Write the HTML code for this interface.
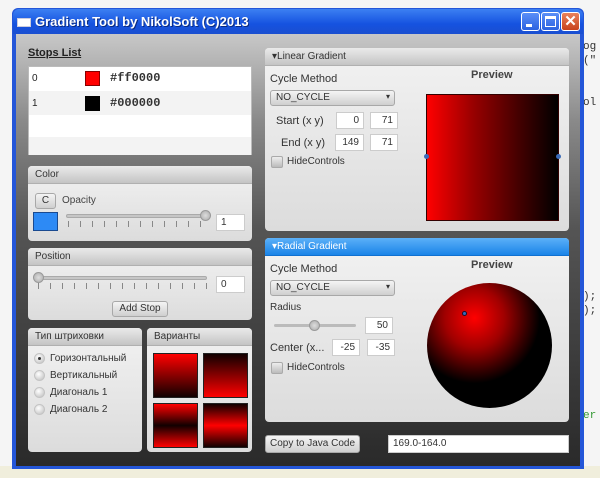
<!DOCTYPE html><html><head><style>
*{box-sizing:border-box;margin:0;padding:0}
body{width:600px;height:478px;overflow:hidden;background:#f0efe8;font-family:"Liberation Sans",sans-serif;font-size:10px;color:#222;position:relative}
.a{position:absolute}
.panel{position:absolute;background:linear-gradient(#f2f2f2,#dcdcdc);border-radius:4px;overflow:hidden}
.hd{height:18px;background:linear-gradient(#eaeaea,#c4c4c4);border-bottom:1px solid #b0b0b0;padding:3px 7px;font-size:10px;color:#333}
.tf{position:absolute;background:#fff;border:1px solid #ccc;height:17px;font-size:10px;padding:2px 4px;color:#333}
.btn{position:absolute;background:linear-gradient(#f4f4f4,#cfcfcf);border:1px solid #a8a8a8;border-radius:3px;font-size:10px;text-align:center;color:#333}
.chk{position:absolute;width:12px;height:12px;background:linear-gradient(#eee,#bbb);border:1px solid #aaa;border-radius:2px}
.rad{position:absolute;width:11px;height:11px;border-radius:50%;background:radial-gradient(circle at 40% 35%,#fff,#bbb);border:1px solid #c4c4c4}
.ticks{position:absolute;height:6px;background:repeating-linear-gradient(90deg,#888 0 1px,transparent 1px 12px)}
.track{position:absolute;height:4px;background:#c6c6c6;border:1px solid #aaa;border-radius:2px}
.thumb{position:absolute;width:11px;height:11px;border-radius:50%;background:radial-gradient(#ddd,#aaa);border:1px solid #999}
</style></head><body>
<div class="a" style="left:0;top:0;width:600px;height:478px;background:#f5f5f5"></div>
<div class="a" style="left:0;top:466px;width:600px;height:12px;background:#f0eedc"></div>
<div class="a" style="left:583px;top:40px;font-family:'Liberation Mono';font-size:11px;color:#333;line-height:14px">og<br>("<br><br><br>ol</div>
<div class="a" style="left:583px;top:290px;font-family:'Liberation Mono';font-size:11px;color:#333;line-height:14px">);<br>);</div>
<div class="a" style="left:583px;top:410px;font-family:'Liberation Mono';font-size:11px;color:#393">er</div>
<div class="a" style="left:12px;top:8px;width:572px;height:461px;background:#2456d8;border-radius:6px 6px 0 0"></div>
<div class="a" style="left:13px;top:9px;width:570px;height:25px;background:linear-gradient(#3c80f2,#1552e0 60%,#1a4fd0);border-radius:6px 6px 0 0"></div>
<div class="a" style="left:17px;top:18px;width:14px;height:9px;background:#fff;border:1px solid #ccd"></div>
<div class="a" style="left:35px;top:14px;color:#fff;font-size:13px;font-weight:bold;text-shadow:1px 1px #0a2a80">Gradient Tool by NikolSoft (C)2013</div>
<div class="a" style="left:521px;top:12px;width:19px;height:19px;background:linear-gradient(#5a8ff8,#2c62e0);border:1px solid #fff;border-radius:3px"><div class="a" style="left:4px;top:11px;width:6px;height:3px;background:#fff"></div></div>
<div class="a" style="left:541px;top:12px;width:19px;height:19px;background:linear-gradient(#5a8ff8,#2c62e0);border:1px solid #fff;border-radius:3px"><div class="a" style="left:3px;top:3px;width:11px;height:11px;border:1px solid #fff;border-top-width:3px"></div></div>
<div class="a" style="left:561px;top:12px;width:19px;height:19px;background:linear-gradient(#e8825c,#c8421c);border:1px solid #fff;border-radius:3px;color:#fff;font-size:15px;font-weight:bold;text-align:center;line-height:17px">✕</div>
<div class="a" style="left:16px;top:34px;width:564px;height:432px;background:linear-gradient(#c8c8c8 0%,#8a8a8a 20%,#555 45%,#3c3c3c 75%,#2a2a2a 100%)"></div>
<div class="a" style="left:28px;top:47px;font-size:11px;font-weight:bold;text-decoration:underline;color:#222">Stops List</div>
<div class="a" style="left:28px;top:66px;width:224px;height:89px;background:#fff;border:1px solid #bbb">
 <div class="a" style="left:0;top:24px;width:222px;height:24px;background:#f3f3f3"></div>
 <div class="a" style="left:0;top:70px;width:222px;height:18px;background:#f3f3f3"></div>
 <div class="a" style="left:3px;top:6px">0</div><div class="a" style="left:3px;top:31px">1</div>
 <div class="a" style="left:56px;top:4px;width:15px;height:15px;background:#f00;border:1px solid #800"></div>
 <div class="a" style="left:56px;top:29px;width:15px;height:15px;background:#000"></div>
 <div class="a" style="left:81px;top:4px;font-family:'Liberation Mono';font-size:12px;font-weight:bold;color:#333">#ff0000</div>
 <div class="a" style="left:81px;top:29px;font-family:'Liberation Mono';font-size:12px;font-weight:bold;color:#333">#000000</div>
</div>
<div class="panel" style="left:28px;top:166px;width:224px;height:75px"><div class="hd">Color</div>
 <div class="btn" style="left:7px;top:27px;width:21px;height:16px;line-height:14px">C</div>
 <div class="a" style="left:34px;top:29px;color:#444">Opacity</div>
 <div class="a" style="left:5px;top:46px;width:25px;height:19px;background:#2d8af5;border:1px solid #1a4a90"></div>
 <div class="track" style="left:38px;top:48px;width:140px"></div><div class="thumb" style="left:172px;top:44px"></div>
 <div class="ticks" style="left:40px;top:55px;width:140px"></div>
 <div class="tf" style="left:188px;top:48px;width:29px">1</div>
</div>
<div class="panel" style="left:28px;top:248px;width:224px;height:72px"><div class="hd">Position</div>
 <div class="track" style="left:9px;top:28px;width:170px"></div><div class="thumb" style="left:5px;top:24px"></div>
 <div class="ticks" style="left:10px;top:35px;width:170px"></div>
 <div class="tf" style="left:188px;top:28px;width:29px">0</div>
 <div class="btn" style="left:84px;top:53px;width:56px;height:16px;line-height:14px">Add Stop</div>
</div>
<div class="panel" style="left:28px;top:328px;width:114px;height:124px"><div class="hd" style="font-family:'Liberation Sans','DejaVu Sans',sans-serif">Тип штриховки</div>
 <div class="rad" style="left:6px;top:25px"><div class="a" style="left:3px;top:3px;width:3px;height:3px;background:#333;border-radius:50%"></div></div>
 <div class="a" style="left:22px;top:25px;color:#333">Горизонтальный</div>
 <div class="rad" style="left:6px;top:42px"></div><div class="a" style="left:22px;top:42px;color:#333">Вертикальный</div>
 <div class="rad" style="left:6px;top:59px"></div><div class="a" style="left:22px;top:59px;color:#333">Диагональ 1</div>
 <div class="rad" style="left:6px;top:76px"></div><div class="a" style="left:22px;top:76px;color:#333">Диагональ 2</div>
</div>
<div class="panel" style="left:147px;top:328px;width:105px;height:124px"><div class="hd">Варианты</div>
 <div class="a" style="left:6px;top:25px;width:45px;height:45px;border:1px solid #222;background:linear-gradient(#f00,#100)"></div>
 <div class="a" style="left:56px;top:25px;width:45px;height:45px;border:1px solid #222;background:linear-gradient(#100,#f00)"></div>
 <div class="a" style="left:6px;top:75px;width:45px;height:45px;border:1px solid #222;background:linear-gradient(#f00,#100 50%,#f00)"></div>
 <div class="a" style="left:56px;top:75px;width:45px;height:45px;border:1px solid #222;background:linear-gradient(#100,#f00 50%,#100)"></div>
</div>
<div class="panel" style="left:265px;top:48px;width:304px;height:183px"><div class="hd">▾Linear Gradient</div>
 <div class="a" style="left:5px;top:25px;font-size:11px;color:#333">Cycle Method</div>
 <div class="btn" style="left:5px;top:42px;width:125px;height:16px;text-align:left;padding:1px 5px">NO_CYCLE<span class="a" style="right:4px;top:1px;font-size:8px">▾</span></div>
 <div class="a" style="left:11px;top:67px;font-size:11px;color:#333">Start (x y)</div>
 <div class="tf" style="left:71px;top:64px;width:28px;text-align:right">0</div><div class="tf" style="left:105px;top:64px;width:28px;text-align:right">71</div>
 <div class="a" style="left:16px;top:89px;font-size:11px;color:#333">End (x y)</div>
 <div class="tf" style="left:70px;top:86px;width:29px;text-align:right">149</div><div class="tf" style="left:105px;top:86px;width:28px;text-align:right">71</div>
 <div class="chk" style="left:6px;top:108px"></div><div class="a" style="left:22px;top:108px;color:#333">HideControls</div>
 <div class="a" style="left:206px;top:21px;font-size:11px;font-weight:bold;color:#444">Preview</div>
 <div class="a" style="left:161px;top:46px;width:133px;height:127px;background:linear-gradient(90deg,#f00,#900 35%,#400 70%,#000);border:1px solid #300"></div>
 <div class="a" style="left:159px;top:106px;width:5px;height:5px;border-radius:50%;background:#3a6ab8"></div>
 <div class="a" style="left:291px;top:106px;width:5px;height:5px;border-radius:50%;background:#3a6ab8"></div>
</div>
<div class="panel" style="left:265px;top:238px;width:304px;height:184px"><div class="hd" style="background:linear-gradient(#5cb0f8,#1a84e8);color:#fff;border-bottom-color:#1070d0">▾Radial Gradient</div>
 <div class="a" style="left:5px;top:25px;font-size:11px;color:#333">Cycle Method</div>
 <div class="btn" style="left:5px;top:42px;width:125px;height:16px;text-align:left;padding:1px 5px">NO_CYCLE<span class="a" style="right:4px;top:1px;font-size:8px">▾</span></div>
 <div class="a" style="left:5px;top:64px;color:#333">Radius</div>
 <div class="a" style="left:9px;top:86px;width:82px;height:3px;background:#bbb;border-radius:2px"></div><div class="thumb" style="left:44px;top:82px"></div>
 <div class="tf" style="left:100px;top:79px;width:28px;text-align:right">50</div>
 <div class="a" style="left:5px;top:104px;font-size:11px;color:#333">Center (x...</div>
 <div class="tf" style="left:67px;top:101px;width:28px;text-align:right">-25</div><div class="tf" style="left:102px;top:101px;width:28px;text-align:right">-35</div>
 <div class="chk" style="left:6px;top:124px"></div><div class="a" style="left:22px;top:124px;color:#333">HideControls</div>
 <div class="a" style="left:206px;top:21px;font-size:11px;font-weight:bold;color:#444">Preview</div>
 <div class="a" style="left:162px;top:45px;width:125px;height:125px;border-radius:50%;background:radial-gradient(circle at 38% 28%,#f00 0,#a00000 25%,#300 45%,#000 55%)"></div>
 <div class="a" style="left:197px;top:73px;width:5px;height:5px;border-radius:50%;background:#3a6ab8;border:1px solid #113"></div>
</div>
<div class="btn" style="left:265px;top:435px;width:95px;height:18px;line-height:16px">Copy to Java Code</div>
<div class="tf" style="left:388px;top:435px;width:181px;height:18px">169.0-164.0</div>
</body></html>
